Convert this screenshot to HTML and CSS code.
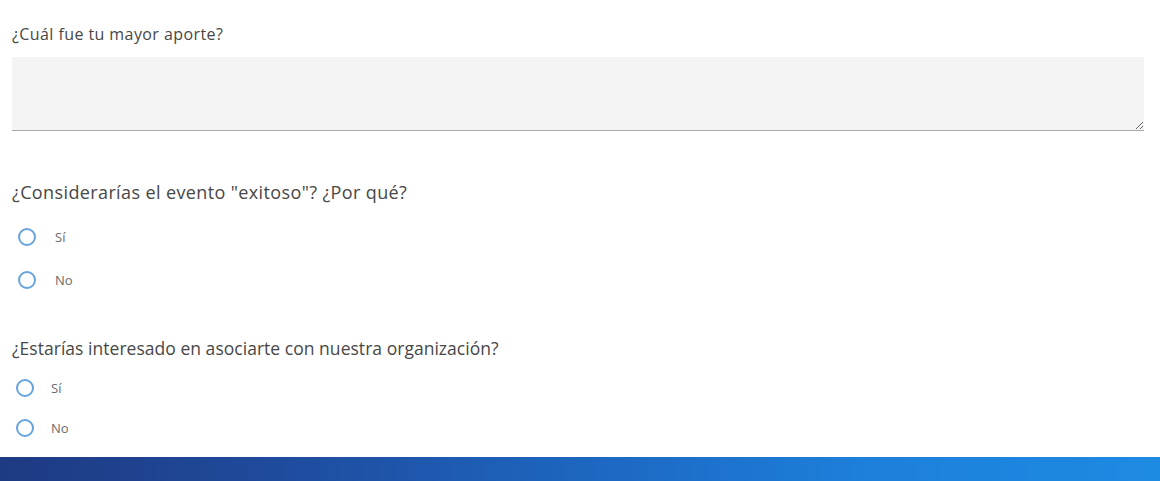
FILE: index.html
```html
<!DOCTYPE html>
<html lang="es">
<head>
<meta charset="utf-8">
<link rel="stylesheet" href="styles.css">
</head>
<body>
<main class="form">
  <section class="field field-text">
    <label class="question question-sm" for="aporte">¿Cuál fue tu mayor aporte?</label>
    <div class="textarea-wrap">
      <textarea id="aporte" class="textarea"></textarea>
    </div>
  </section>

  <section class="field field-radio field-radio-a">
    <div class="question question-lg question-wide">¿Considerarías el evento "exitoso"? ¿Por qué?</div>
    <div class="options">
      <label class="option"><span class="radio"></span><span class="opt-label">Sí</span></label>
      <label class="option"><span class="radio"></span><span class="opt-label">No</span></label>
    </div>
  </section>

  <section class="field field-radio field-radio-b">
    <div class="question question-lg">¿Estarías interesado en asociarte con nuestra organización?</div>
    <div class="options">
      <label class="option"><span class="radio"></span><span class="opt-label">Sí</span></label>
      <label class="option"><span class="radio"></span><span class="opt-label">No</span></label>
    </div>
  </section>
</main>
<footer class="bar"></footer>
</body>
</html>
```

FILE: styles.css
```css
* { box-sizing: border-box; }
html, body { margin: 0; padding: 0; background: #fff; }
body {
  width: 1160px;
  height: 481px;
  overflow: hidden;
  display: flex;
  flex-direction: column;
  font-family: "Open Sans", "Noto Sans", sans-serif;
  color: #555;
}
.form {
  flex: 1;
  padding: 24px 16px 0 12px;
  display: flex;
  flex-direction: column;
}
.question {
  display: block;
  color: #474747;
  white-space: nowrap;
  font-weight: 500;
}
.question-sm {
  font-size: 16px;
  line-height: 20px;
  letter-spacing: 0.42px;
}
.question-lg {
  font-size: 17.5px;
  line-height: 22px;
  letter-spacing: 0.03px;
}
.question-wide {
  font-size: 18px;
  letter-spacing: 0.38px;
}
.textarea-wrap {
  margin-top: 13px;
}
.textarea {
  display: block;
  width: 100%;
  height: 74px;
  background: #f4f4f4;
  border: none;
  border-bottom: 1px solid #a8a8a8;
  resize: vertical;
  margin: 0;
  padding: 8px;
  font: inherit;
}
.field-radio-a { margin-top: 50px; }
.field-radio-b { margin-top: 46px; }
.options {
  display: flex;
  flex-direction: column;
}
.field-radio-a .options { margin-top: 23px; gap: 21px; padding-left: 6px; }
.field-radio-b .options { margin-top: 18px; gap: 18px; padding-left: 4px; }
.option {
  display: flex;
  align-items: center;
  height: 22px;
  gap: 19px;
}
.field-radio-b .option { gap: 17px; }
.radio {
  width: 18px;
  height: 18px;
  border: 2px solid #68a3dc;
  border-radius: 50%;
  background: #fff;
  flex: none;
}
.opt-label {
  font-size: 13px;
  color: #6a6a6a;
}
.bar {
  height: 24px;
  flex: none;
  background: linear-gradient(90deg, #1e3a82 0%, #1f4c9e 25%, #1d66c0 50%, #1d80db 75%, #1d8ae2 100%);
}
```
